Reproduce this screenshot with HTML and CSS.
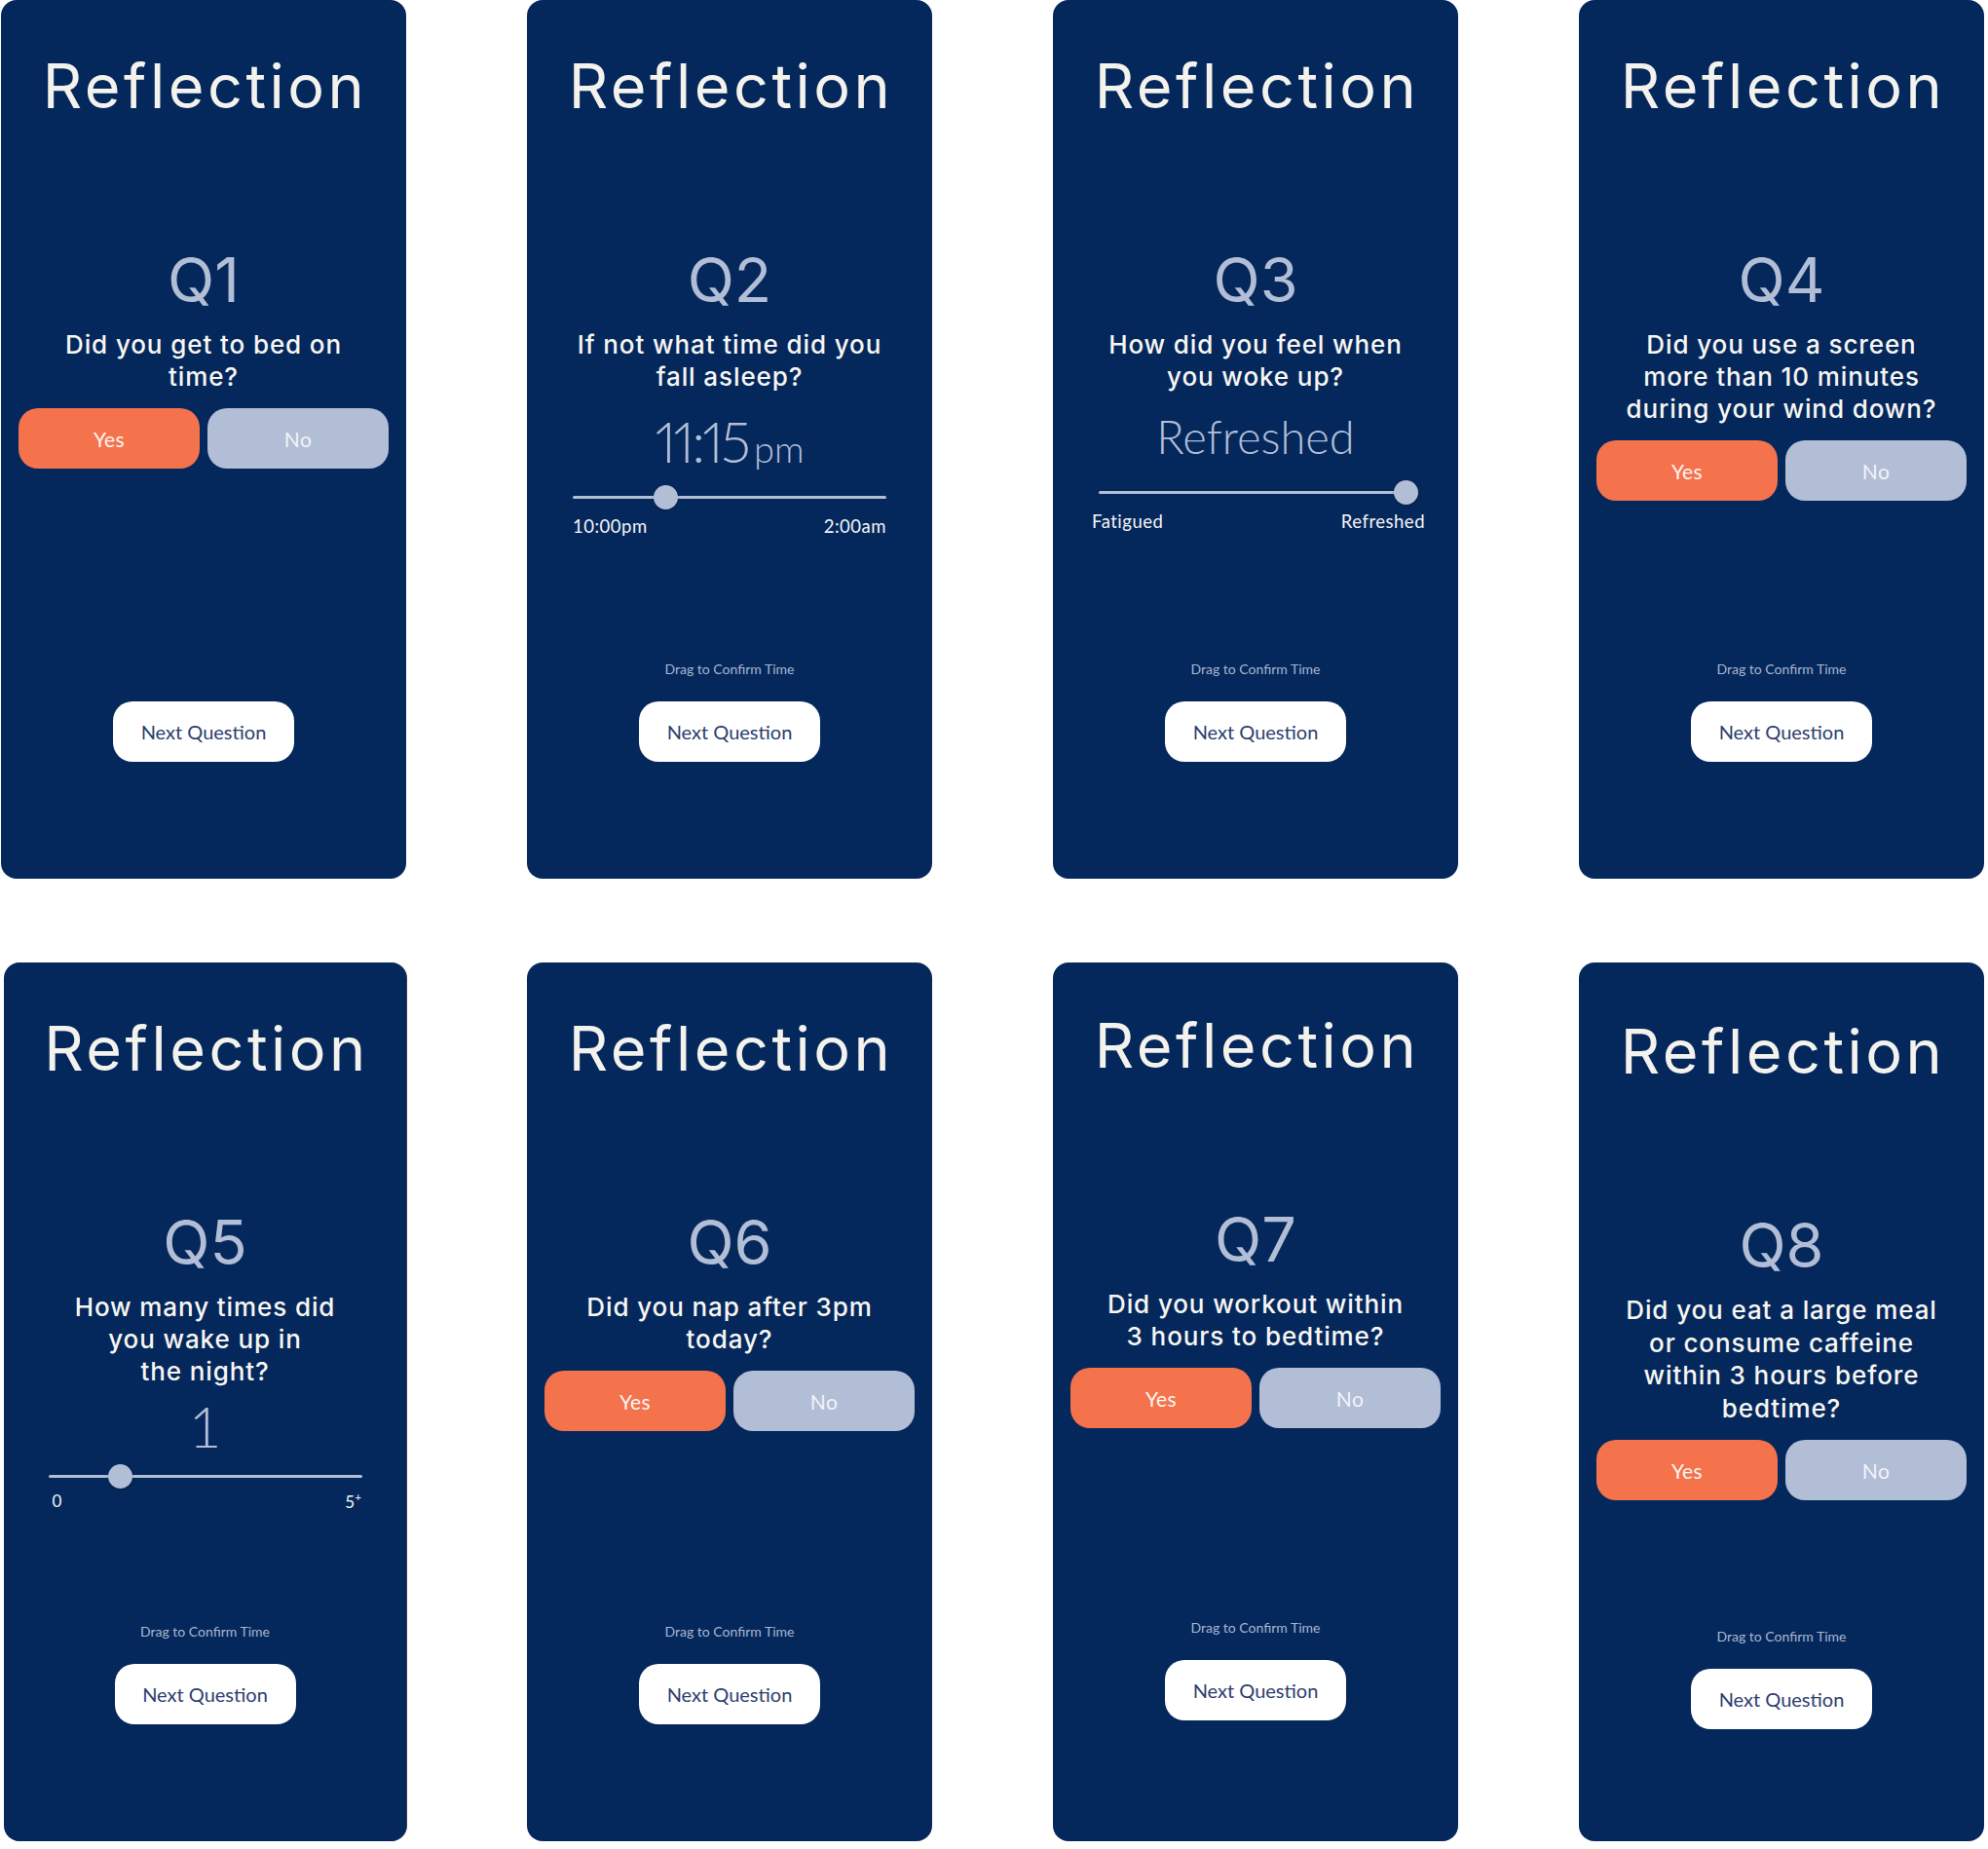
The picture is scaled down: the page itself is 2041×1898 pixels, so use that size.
FILE: index.html
```html
<!DOCTYPE html>
<html lang="en">
<head>
<meta charset="utf-8">
<title>Reflection</title>
<link rel="stylesheet" href="styles.css">
</head>
<body>
<main class="board">

  <section class="card">
    <h1 class="title">Reflection</h1>
    <div class="qnum">Q1</div>
    <p class="question">Did you get to bed on<br>time?</p>
    <div class="choices"><button class="choice choice--yes">Yes</button><button class="choice choice--no">No</button></div>
    <div class="footer"><button class="next">Next Question</button></div>
  </section>

  <section class="card">
    <h1 class="title">Reflection</h1>
    <div class="qnum">Q2</div>
    <p class="question">If not what time did you<br>fall asleep?</p>
    <div class="value value--time">11:15<span class="unit">pm</span></div>
    <div class="slider slider--time">
      <div class="track"><span class="thumb" style="left: 29.6%"></span></div>
      <div class="scale"><span>10:00pm</span><span>2:00am</span></div>
    </div>
    <div class="footer"><p class="hint">Drag to Confirm Time</p><button class="next">Next Question</button></div>
  </section>

  <section class="card">
    <h1 class="title">Reflection</h1>
    <div class="qnum">Q3</div>
    <p class="question">How did you feel when<br>you woke up?</p>
    <div class="value value--word">Refreshed</div>
    <div class="slider slider--wide">
      <div class="track"><span class="thumb" style="left: 98%"></span></div>
      <div class="scale"><span>Fatigued</span><span>Refreshed</span></div>
    </div>
    <div class="footer"><p class="hint">Drag to Confirm Time</p><button class="next">Next Question</button></div>
  </section>

  <section class="card">
    <h1 class="title">Reflection</h1>
    <div class="qnum">Q4</div>
    <p class="question">Did you use a screen<br>more than 10 minutes<br>during your wind down?</p>
    <div class="choices"><button class="choice choice--yes">Yes</button><button class="choice choice--no">No</button></div>
    <div class="footer"><p class="hint">Drag to Confirm Time</p><button class="next">Next Question</button></div>
  </section>

  <section class="card card--shift">
    <h1 class="title">Reflection</h1>
    <div class="qnum">Q5</div>
    <p class="question">How many times did<br>you wake up in<br>the night?</p>
    <div class="value value--count">1</div>
    <div class="slider slider--count">
      <div class="track"><span class="thumb" style="left: 23%"></span></div>
      <div class="scale"><span>0</span><span>5<sup>+</sup></span></div>
    </div>
    <div class="footer"><p class="hint">Drag to Confirm Time</p><button class="next">Next Question</button></div>
  </section>

  <section class="card">
    <h1 class="title">Reflection</h1>
    <div class="qnum">Q6</div>
    <p class="question">Did you nap after 3pm<br>today?</p>
    <div class="choices"><button class="choice choice--yes">Yes</button><button class="choice choice--no">No</button></div>
    <div class="footer"><p class="hint">Drag to Confirm Time</p><button class="next">Next Question</button></div>
  </section>

  <section class="card card--raised">
    <h1 class="title">Reflection</h1>
    <div class="qnum">Q7</div>
    <p class="question">Did you workout within<br>3 hours to bedtime?</p>
    <div class="choices"><button class="choice choice--yes">Yes</button><button class="choice choice--no">No</button></div>
    <div class="footer"><p class="hint">Drag to Confirm Time</p><button class="next">Next Question</button></div>
  </section>

  <section class="card card--lowered">
    <h1 class="title">Reflection</h1>
    <div class="qnum">Q8</div>
    <p class="question">Did you eat a large meal<br>or consume caffeine<br>within 3 hours before<br>bedtime?</p>
    <div class="choices"><button class="choice choice--yes">Yes</button><button class="choice choice--no">No</button></div>
    <div class="footer"><p class="hint">Drag to Confirm Time</p><button class="next">Next Question</button></div>
  </section>

</main>
</body>
</html>
```

FILE: styles.css
```css
* { box-sizing: border-box; }

html, body {
  margin: 0;
  padding: 0;
  background: #ffffff;
}

.board {
  display: grid;
  grid-template-columns: repeat(4, 416px);
  column-gap: 124px;
  row-gap: 86px;
  padding: 0 0 0 1px;
}

.card {
  height: 902px;
  background: #05285c;
  border-radius: 16px;
  display: flex;
  flex-direction: column;
  align-items: center;
  font-family: "Inter", "Noto Sans", sans-serif;
}

.card--shift {
  margin-left: 3px;
  box-shadow: 1px 0 0 #3a3a3a;
}

.title {
  margin: 57px 0 0 3px;
  font-size: 63px;
  line-height: 63px;
  font-weight: 400;
  color: #f4f2ec;
  letter-spacing: 3.5px;
}

.qnum {
  margin-top: 136px;
  font-size: 63px;
  line-height: 63px;
  font-weight: 400;
  color: #b2bdd6;
}

.question {
  margin: 18px 0 0;
  font-size: 26px;
  line-height: 33px;
  font-weight: 500;
  letter-spacing: 0.9px;
  color: #f7f6f2;
  text-align: center;
}

.choices {
  margin-top: 16px;
  display: flex;
  gap: 8px;
}

.choice {
  width: 186px;
  height: 62px;
  border: 0;
  border-radius: 20px;
  font-family: "Lato", sans-serif;
  font-size: 21px;
  letter-spacing: 0.4px;
  color: #fff6f2;
}

.choice--yes { background: #f4724c; }
.choice--no { background: #b2bdd6; color: #f2f4f8; }

.value {
  font-family: "Lato", sans-serif;
  font-weight: 300;
  color: #b2bdd6;
  line-height: 1;
}

.value--time {
  margin-top: 21px;
  font-size: 58px;
  font-variant-numeric: proportional-nums;
  letter-spacing: -3px;
}

.unit {
  font-size: 38px;
  letter-spacing: 0;
  margin-left: 6px;
}

.value--word {
  margin-top: 22px;
  font-size: 47px;
}

.value--count {
  margin-top: 11px;
  font-size: 58px;
}

.slider {
  width: 322px;
  margin-top: 18px;
}

.slider--time { margin-top: 27px; }
.slider--wide { margin-top: 32px; }
.slider--count { margin-top: 21px; }

.track {
  position: relative;
  height: 3px;
  border-radius: 2px;
  background: #b2bdd6;
}

.thumb {
  position: absolute;
  top: 50%;
  width: 25px;
  height: 25px;
  margin: -12.5px 0 0 -12.5px;
  border-radius: 50%;
  background: #b2bdd6;
  box-shadow: 0 1px 3px rgba(0, 0, 0, 0.25);
}

.scale {
  margin-top: 17px;
  display: flex;
  justify-content: space-between;
  font-family: "Lato", sans-serif;
  font-size: 18.5px;
  letter-spacing: 0.5px;
  color: #f4f4f6;
}

.slider--wide .scale { margin-top: 17px; margin-left: -7px; margin-right: -13px; }
.slider--count .scale { margin-top: 13px; margin-left: 4px; font-size: 17px; }

.scale sup { font-size: 11px; }

.footer {
  margin-top: auto;
  padding-bottom: 120px;
  display: flex;
  flex-direction: column;
  align-items: center;
}

.hint {
  margin: 0 0 26px;
  font-family: "Lato", sans-serif;
  font-size: 14px;
  line-height: 14px;
  color: #aab5cf;
}

.next {
  width: 186px;
  height: 62px;
  border: 0;
  border-radius: 20px;
  background: #ffffff;
  font-family: "Lato", sans-serif;
  font-size: 20px;
  color: #2c3e6e;
}

.card--raised .title { margin-top: 54px; }
.card--raised .footer { padding-bottom: 124px; }

.card--lowered .title { margin-top: 60px; }
.card--lowered .question { line-height: 33.5px; }
.card--lowered .footer { padding-bottom: 115px; }
```
